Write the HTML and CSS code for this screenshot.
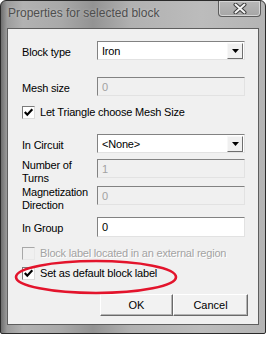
FILE: index.html
```html
<!DOCTYPE html>
<html lang="en">
<head>
  <meta charset="UTF-8" />
  <title>Properties for selected block</title>
  <link rel="stylesheet" href="styles.css">
</head>
<body>

  <div class="window">
    <!-- Title bar -->
    <div class="titlebar">
      <span class="title">Properties for selected block</span>
      <div class="close">
        <svg width="14" height="11" viewBox="0 0 14 11">
          <path d="M2.5 1.5 L11.5 9.5 M11.5 1.5 L2.5 9.5" stroke="#3c3c3c" stroke-width="4" stroke-linecap="round"/>
          <path d="M2.5 1.5 L11.5 9.5 M11.5 1.5 L2.5 9.5" stroke="#f4f4f4" stroke-width="2" stroke-linecap="round"/>
        </svg>
      </div>
    </div>

    <!-- Dialog body -->
    <div class="client">
      <div class="row r-type">
        <span class="label">Block type</span>
        <div class="field combo">
          <span class="value">Iron</span>
          <span class="drop"><svg width="7" height="4" viewBox="0 0 7 4"><path d="M0 0 H7 L3.5 4 Z" fill="#000"/></svg></span>
        </div>
      </div>

      <div class="row r-mesh">
        <span class="label">Mesh size</span>
        <div class="field disabled"><span class="value">0</span></div>
      </div>

      <div class="check r-auto">
        <span class="box"><svg width="11" height="11" viewBox="0 0 11 11"><path d="M1.8 5 L4.3 7.7 L9.3 2.3" stroke="#000" stroke-width="2.2" fill="none"/></svg></span>
        <span>Let Triangle choose Mesh Size</span>
      </div>

      <div class="row r-circuit">
        <span class="label">In Circuit</span>
        <div class="field combo">
          <span class="value">&lt;None&gt;</span>
          <span class="drop"><svg width="7" height="4" viewBox="0 0 7 4"><path d="M0 0 H7 L3.5 4 Z" fill="#000"/></svg></span>
        </div>
      </div>

      <div class="row r-turns">
        <span class="label two">Number of<br>Turns</span>
        <div class="field disabled"><span class="value">1</span></div>
      </div>

      <div class="row r-magnet">
        <span class="label two">Magnetization<br>Direction</span>
        <div class="field disabled"><span class="value">0</span></div>
      </div>

      <div class="row r-group">
        <span class="label">In Group</span>
        <div class="field"><span class="value">0</span></div>
      </div>

      <div class="check off r-external">
        <span class="box"></span>
        <span>Block label located in an external region</span>
      </div>

      <div class="check r-default">
        <span class="box"><svg width="11" height="11" viewBox="0 0 11 11"><path d="M1.8 5 L4.3 7.7 L9.3 2.3" stroke="#000" stroke-width="2.2" fill="none"/></svg></span>
        <span>Set as default block label</span>
      </div>

      <div class="buttons">
        <div class="btn ok">OK</div>
        <div class="btn cancel">Cancel</div>
      </div>

      <!-- red annotation drawn over the dialog -->
      <svg class="mark" width="168" height="40" viewBox="0 0 168 40">
        <ellipse cx="84" cy="19" rx="80" ry="16" fill="none" stroke="#e3142c" stroke-width="2.6"/>
      </svg>
    </div>
  </div>

</body>
</html>
```

FILE: styles.css
```css
* {
  box-sizing: border-box;
}

body {
  margin: 0;
  background: #ffffff;
  font-family: 'Liberation Sans', Arial, sans-serif;
  font-size: 11px;
  letter-spacing: -0.2px;
  color: #000;
}

.window {
  width: 266px;
  height: 334px;
  padding: 0 6px 8px 6px;
  border: 1px solid #2a2a2a;
  border-radius: 6px 6px 2px 2px;
  background: linear-gradient(to right, #6e6e6e 0, #9c9c9c 6px, #b2b2b2 22px, #a9a9a9 60px, #939393 92px, #b1b1b1 130px, #bcbcbc 200px, #b4b4b4 100%);
  display: flex;
  flex-direction: column;
}

.titlebar {
  height: 27px;
  display: flex;
  justify-content: space-between;
  align-items: flex-start;
  margin-right: -2px;
}

.title {
  margin-top: 5px;
  margin-left: 1px;
  font-size: 12px;
  line-height: 15px;
  letter-spacing: 0;
  color: #4e4e4e;
  text-shadow: 0 0 3px rgba(255, 255, 255, 0.35);
}

.close {
  width: 43px;
  height: 16px;
  border: 1px solid #5c5c5c;
  border-top: none;
  border-radius: 0 0 4px 4px;
  box-shadow: inset 0 0 0 1px #d4d4d4;
  background: linear-gradient(#b8b8b8, #a6a6a6);
  display: flex;
  align-items: center;
  justify-content: center;
}

.client {
  position: relative;
  flex: 1;
  background: #f0f0f0;
  border: 1px solid #5e5e5e;
  padding: 12px 13px 0 14px;
  display: flex;
  flex-direction: column;
}

.row {
  height: 19px;
  display: flex;
  align-items: center;
}

.label {
  width: 75px;
  flex: none;
  padding-top: 3px;
  line-height: 13px;
}

.label.two {
  padding-top: 7px;
}

.field {
  flex: 1;
  height: 19px;
  background: #ffffff;
  border: 1px solid;
  border-color: #828282 #e2e2e2 #e2e2e2 #828282;
  display: flex;
  align-items: center;
  padding-left: 4px;
}

.field.disabled {
  background: #f0f0f0;
  color: #a2a2a2;
}

.combo {
  padding-right: 1px;
}

.combo .value {
  flex: 1;
}

.drop {
  width: 16px;
  height: 16px;
  background: #f0f0f0;
  border: 1px solid;
  border-color: #f8f8f8 #6e6e6e #6e6e6e #f8f8f8;
  display: flex;
  align-items: center;
  justify-content: center;
}

.r-mesh { margin-top: 17px; }
.r-auto { margin-top: 9px; }
.r-circuit { margin-top: 15px; }
.r-turns { margin-top: 6px; }
.r-magnet { margin-top: 8px; }
.r-group { margin-top: 12px; height: 20px; }
.r-group .field { height: 20px; }
.r-external { margin-top: 9px; }
.r-default { margin-top: 6px; }

.check {
  height: 14px;
  display: flex;
  align-items: center;
  gap: 4px;
}

.box {
  width: 13px;
  height: 13px;
  background: #ffffff;
  border: 1px solid;
  border-color: #7a7a7a #dcdcdc #dcdcdc #7a7a7a;
  display: flex;
  align-items: center;
  justify-content: center;
}

.check span:last-child {
  margin-left: 1px;
}

.check.off {
  color: #a3a3a3;
  text-shadow: 1px 1px 0 #ffffff;
}

.check.off .box {
  background: #f0f0f0;
  border-color: #a8a8a8 #e8e8e8 #e8e8e8 #a8a8a8;
}

.buttons {
  margin-top: 14px;
  margin-right: -3px;
  display: flex;
  justify-content: flex-end;
}

.btn {
  height: 22px;
  background: #f2f2f2;
  border: 1px solid;
  border-color: #ffffff #6a6a6a #6a6a6a #ffffff;
  box-shadow: inset -1px -1px 0 #b4b4b4;
  display: flex;
  align-items: center;
  justify-content: center;
  letter-spacing: 0;
}

.ok { width: 73px; }
.cancel { width: 75px; }

.mark {
  position: absolute;
  left: 4px;
  top: 229px;
}
```
